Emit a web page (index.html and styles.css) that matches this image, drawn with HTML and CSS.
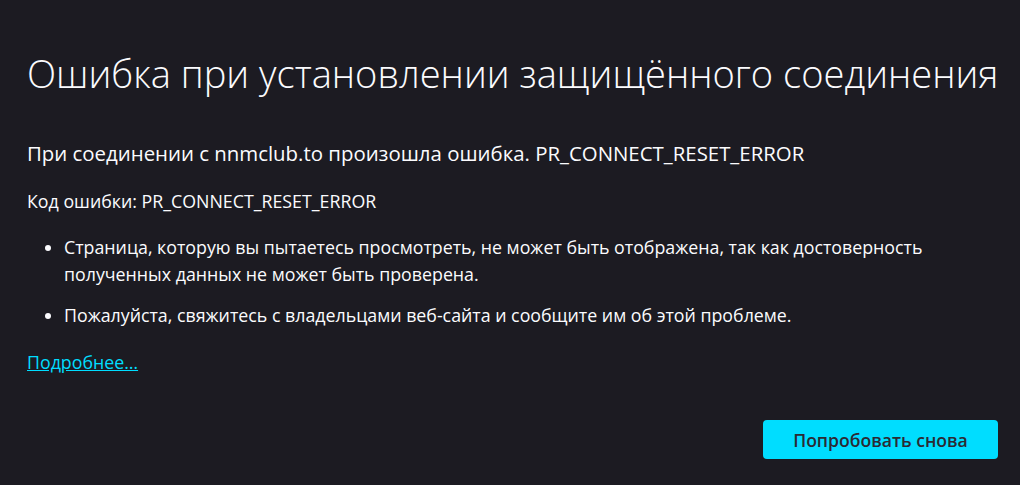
FILE: index.html
```html
<!DOCTYPE html>
<html lang="ru">
<head>
<meta charset="utf-8">
<title>Ошибка при установлении защищённого соединения</title>
<link rel="stylesheet" href="styles.css">
</head>
<body>
<main class="container">
  <h1 class="title">Ошибка при установлении защищённого соединения</h1>
  <p class="short-desc">При соединении с nnmclub.to произошла ошибка. PR_CONNECT_RESET_ERROR</p>
  <p class="code">Код ошибки: PR_CONNECT_RESET_ERROR</p>
  <ul class="list">
    <li class="item">Страница, которую вы пытаетесь просмотреть, не может быть отображена, так как достоверность полученных данных не может быть проверена.</li>
    <li class="item">Пожалуйста, свяжитесь с владельцами веб-сайта и сообщите им об этой проблеме.</li>
  </ul>
  <a class="more" href="#">Подробнее…</a>
  <div class="actions">
    <button class="retry" type="button">Попробовать снова</button>
  </div>
</main>
</body>
</html>
```
FILE: styles.css
```css
html, body {
  margin: 0;
  padding: 0;
  background: #1c1b22;
  color: #fbfbfe;
  font-family: "Open Sans", "Noto Sans", sans-serif;
}
.container {
  padding: 43px 22px 0 27px;
  display: flex;
  flex-direction: column;
}
.title {
  margin: 0;
  font-size: 38.1px;
  font-weight: 300;
  line-height: 60px;
  white-space: nowrap;
}
.short-desc {
  margin: 35px 0 0;
  font-size: 20.4px;
  line-height: 30px;
}
.code {
  margin: 19.5px 0 0;
  font-size: 17.8px;
  line-height: 27px;
}
.list {
  margin: 19px 0 0;
  padding-left: 37px;
}
.item {
  font-size: 17.8px;
  line-height: 27px;
  margin-bottom: 14px;
}
.item:last-child { margin-bottom: 0; }
.more {
  margin-top: 20px;
  align-self: flex-start;
  color: #00ddff;
  font-size: 17.8px;
  line-height: 27px;
}
.actions {
  margin-top: 44.5px;
  display: flex;
  justify-content: flex-end;
}
.retry {
  width: 235px;
  height: 39px;
  border: 0;
  border-radius: 4px;
  background: #00ddff;
  color: #2b2a33;
  font-family: inherit;
  font-size: 17.6px;
  font-weight: 600;
}
```
